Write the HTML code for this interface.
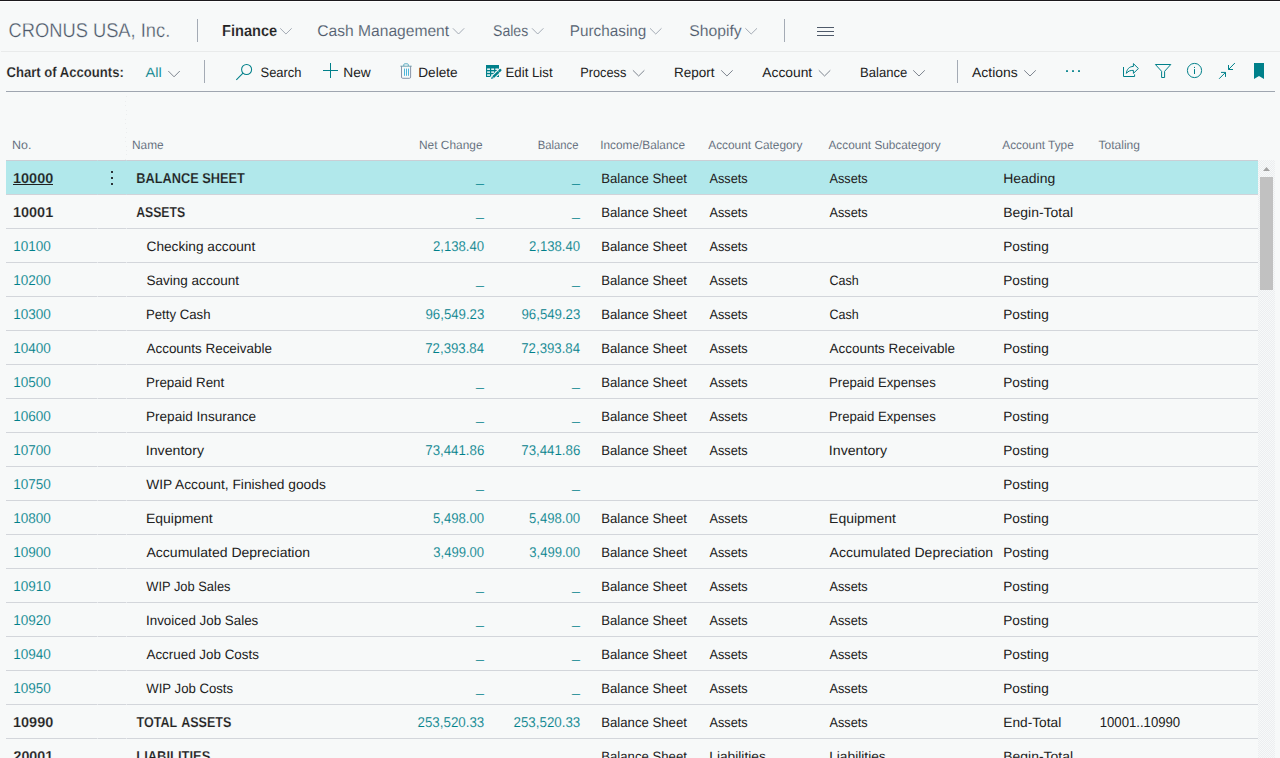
<!DOCTYPE html>
<html lang="en"><head><meta charset="utf-8"><title>Chart of Accounts</title>
<style>
html,body{margin:0;padding:0;background:#f7f9f9;}
body{width:1280px;height:758px;overflow:hidden;}
#app{position:relative;width:1280px;height:758px;overflow:hidden;background:#f7f9f9;font-family:"Liberation Sans", sans-serif;}

.t{position:absolute;left:0;top:0;white-space:nowrap;line-height:1;transform-origin:0 0;font-family:"Liberation Sans", sans-serif;text-rendering:geometricPrecision;}
.t{-webkit-text-stroke:0 #f7f9f9;}
.th{-webkit-text-stroke-width:0.12px;}
.sb{font-weight:700;-webkit-text-stroke-width:0.16px;}
.sel{-webkit-text-stroke-color:#b1e8eb;}
#company{-webkit-text-stroke-width:0.3px;}

h1,a{margin:0;font-weight:400;text-decoration:none;display:block;}
.b{position:absolute;}
.sc{background:repeating-conic-gradient(#eceef0 0% 25%, #f7f9f9 0% 50%) 0 0/2px 2px;}


</style></head><body>
<div id="app">
<div class="b" style="left:0px;top:0px;width:1280px;height:1px;background:#1c1a1d"></div>
<div class="b" style="left:0px;top:1px;width:1280px;height:1px;background:#ffffff"></div>
<div class="b" style="left:1px;top:51px;width:1279px;height:1px;background:#e9ebeb"></div>
<div class="b" style="left:6px;top:91px;width:1269px;height:1px;background:#9fa6b0"></div>
<div class="b" style="left:197px;top:19px;width:1px;height:23px;background:#a4abb5"></div>
<div class="b" style="left:784px;top:19px;width:1px;height:23px;background:#a4abb5"></div>
<div class="b" style="left:204px;top:60px;width:1px;height:23px;background:#a4abb5"></div>
<div class="b" style="left:957px;top:60px;width:1px;height:23px;background:#a4abb5"></div>
<div class="b" style="left:817px;top:27px;width:16.5px;height:1px;background:#4f5a6a"></div>
<div class="b" style="left:817px;top:31px;width:16.5px;height:1px;background:#4f5a6a"></div>
<div class="b" style="left:817px;top:35px;width:16.5px;height:1px;background:#4f5a6a"></div>
<div class="b" style="left:6px;top:160px;width:1252px;height:1px;background:#cbced5"></div>
<div class="b" style="left:6px;top:161px;width:1252px;height:33px;background:#b1e8eb"></div>
<div class="b" style="left:6px;top:194px;width:1252px;height:1px;background:#d0d3d9"></div>
<div class="b" style="left:6px;top:228px;width:1252px;height:1px;background:#d3d6db"></div>
<div class="b" style="left:6px;top:262px;width:1252px;height:1px;background:#d3d6db"></div>
<div class="b" style="left:6px;top:296px;width:1252px;height:1px;background:#d3d6db"></div>
<div class="b" style="left:6px;top:330px;width:1252px;height:1px;background:#d3d6db"></div>
<div class="b" style="left:6px;top:364px;width:1252px;height:1px;background:#d3d6db"></div>
<div class="b" style="left:6px;top:398px;width:1252px;height:1px;background:#d3d6db"></div>
<div class="b" style="left:6px;top:432px;width:1252px;height:1px;background:#d3d6db"></div>
<div class="b" style="left:6px;top:466px;width:1252px;height:1px;background:#d3d6db"></div>
<div class="b" style="left:6px;top:500px;width:1252px;height:1px;background:#d3d6db"></div>
<div class="b" style="left:6px;top:534px;width:1252px;height:1px;background:#d3d6db"></div>
<div class="b" style="left:6px;top:568px;width:1252px;height:1px;background:#d3d6db"></div>
<div class="b" style="left:6px;top:602px;width:1252px;height:1px;background:#d3d6db"></div>
<div class="b" style="left:6px;top:636px;width:1252px;height:1px;background:#d3d6db"></div>
<div class="b" style="left:6px;top:670px;width:1252px;height:1px;background:#d3d6db"></div>
<div class="b" style="left:6px;top:704px;width:1252px;height:1px;background:#d3d6db"></div>
<div class="b" style="left:6px;top:738px;width:1252px;height:1px;background:#d3d6db"></div>
<div class="b" style="left:97px;top:160px;width:1px;height:1px;background:rgba(190,235,238,0.5)"></div>
<div class="b" style="left:126px;top:160px;width:1px;height:1px;background:rgba(190,235,238,0.5)"></div>
<div class="b" style="left:97px;top:194px;width:1px;height:1px;background:rgba(190,235,238,0.5)"></div>
<div class="b" style="left:126px;top:194px;width:1px;height:1px;background:rgba(190,235,238,0.5)"></div>
<div class="b" style="left:97px;top:228px;width:1px;height:1px;background:rgba(247,249,249,0.55)"></div>
<div class="b" style="left:126px;top:228px;width:1px;height:1px;background:rgba(247,249,249,0.55)"></div>
<div class="b" style="left:97px;top:262px;width:1px;height:1px;background:rgba(247,249,249,0.55)"></div>
<div class="b" style="left:126px;top:262px;width:1px;height:1px;background:rgba(247,249,249,0.55)"></div>
<div class="b" style="left:97px;top:296px;width:1px;height:1px;background:rgba(247,249,249,0.55)"></div>
<div class="b" style="left:126px;top:296px;width:1px;height:1px;background:rgba(247,249,249,0.55)"></div>
<div class="b" style="left:97px;top:330px;width:1px;height:1px;background:rgba(247,249,249,0.55)"></div>
<div class="b" style="left:126px;top:330px;width:1px;height:1px;background:rgba(247,249,249,0.55)"></div>
<div class="b" style="left:97px;top:364px;width:1px;height:1px;background:rgba(247,249,249,0.55)"></div>
<div class="b" style="left:126px;top:364px;width:1px;height:1px;background:rgba(247,249,249,0.55)"></div>
<div class="b" style="left:97px;top:398px;width:1px;height:1px;background:rgba(247,249,249,0.55)"></div>
<div class="b" style="left:126px;top:398px;width:1px;height:1px;background:rgba(247,249,249,0.55)"></div>
<div class="b" style="left:97px;top:432px;width:1px;height:1px;background:rgba(247,249,249,0.55)"></div>
<div class="b" style="left:126px;top:432px;width:1px;height:1px;background:rgba(247,249,249,0.55)"></div>
<div class="b" style="left:97px;top:466px;width:1px;height:1px;background:rgba(247,249,249,0.55)"></div>
<div class="b" style="left:126px;top:466px;width:1px;height:1px;background:rgba(247,249,249,0.55)"></div>
<div class="b" style="left:97px;top:500px;width:1px;height:1px;background:rgba(247,249,249,0.55)"></div>
<div class="b" style="left:126px;top:500px;width:1px;height:1px;background:rgba(247,249,249,0.55)"></div>
<div class="b" style="left:97px;top:534px;width:1px;height:1px;background:rgba(247,249,249,0.55)"></div>
<div class="b" style="left:126px;top:534px;width:1px;height:1px;background:rgba(247,249,249,0.55)"></div>
<div class="b" style="left:97px;top:568px;width:1px;height:1px;background:rgba(247,249,249,0.55)"></div>
<div class="b" style="left:126px;top:568px;width:1px;height:1px;background:rgba(247,249,249,0.55)"></div>
<div class="b" style="left:97px;top:602px;width:1px;height:1px;background:rgba(247,249,249,0.55)"></div>
<div class="b" style="left:126px;top:602px;width:1px;height:1px;background:rgba(247,249,249,0.55)"></div>
<div class="b" style="left:97px;top:636px;width:1px;height:1px;background:rgba(247,249,249,0.55)"></div>
<div class="b" style="left:126px;top:636px;width:1px;height:1px;background:rgba(247,249,249,0.55)"></div>
<div class="b" style="left:97px;top:670px;width:1px;height:1px;background:rgba(247,249,249,0.55)"></div>
<div class="b" style="left:126px;top:670px;width:1px;height:1px;background:rgba(247,249,249,0.55)"></div>
<div class="b" style="left:97px;top:704px;width:1px;height:1px;background:rgba(247,249,249,0.55)"></div>
<div class="b" style="left:126px;top:704px;width:1px;height:1px;background:rgba(247,249,249,0.55)"></div>
<div class="b" style="left:97px;top:738px;width:1px;height:1px;background:rgba(247,249,249,0.55)"></div>
<div class="b" style="left:126px;top:738px;width:1px;height:1px;background:rgba(247,249,249,0.55)"></div>
<div class="b" style="left:126px;top:96px;width:1px;height:1px;background:#eceeef"></div>
<div class="b" style="left:125px;top:101px;width:1px;height:1px;background:#eceeef"></div>
<div class="b" style="left:125px;top:105px;width:1px;height:1px;background:#eceeef"></div>
<div class="b" style="left:126px;top:110px;width:1px;height:1px;background:#eceeef"></div>
<div class="b" style="left:126px;top:114px;width:1px;height:1px;background:#eceeef"></div>
<div class="b" style="left:125px;top:119px;width:1px;height:1px;background:#eceeef"></div>
<div class="b" style="left:125px;top:123px;width:1px;height:1px;background:#eceeef"></div>
<div class="b" style="left:126px;top:128px;width:1px;height:1px;background:#eceeef"></div>
<div class="b" style="left:126px;top:132px;width:1px;height:1px;background:#eceeef"></div>
<div class="b" style="left:125px;top:137px;width:1px;height:1px;background:#eceeef"></div>
<div class="b" style="left:125px;top:141px;width:1px;height:1px;background:#eceeef"></div>
<div class="b" style="left:126px;top:146px;width:1px;height:1px;background:#eceeef"></div>
<div class="b" style="left:126px;top:150px;width:1px;height:1px;background:#eceeef"></div>
<div class="b" style="left:126px;top:154px;width:1px;height:1px;background:#eceeef"></div>
<div class="b" style="left:125px;top:159px;width:1px;height:1px;background:#eceeef"></div>
<div class="b sc" style="left:1258px;top:160px;width:17px;height:598px"></div>
<div class="b" style="left:1260px;top:177px;width:13px;height:113px;background:#c1c1c1"></div>
<svg width="1280" height="758" viewBox="0 0 1280 758" style="position:absolute;left:0;top:0" aria-hidden="true"><path d="M280.2 28.3 L285.95 34 L291.7 28.3" fill="none" stroke="#9aa2ad" stroke-width="0.9"/>
<path d="M452.9 28.3 L458.55 34 L464.2 28.3" fill="none" stroke="#9aa2ad" stroke-width="0.9"/>
<path d="M532 28.3 L537.7 34 L543.4 28.3" fill="none" stroke="#9aa2ad" stroke-width="0.9"/>
<path d="M650 28.3 L655.75 34 L661.5 28.3" fill="none" stroke="#9aa2ad" stroke-width="0.9"/>
<path d="M745.4 28.3 L751.2 34 L757 28.3" fill="none" stroke="#9aa2ad" stroke-width="0.9"/>
<path d="M168.3 71 L174.05 76.8 L179.8 71" fill="none" stroke="#6f7782" stroke-width="0.9"/>
<path d="M632.9 70.3 L638.65 76 L644.4 70.3" fill="none" stroke="#6f7782" stroke-width="0.9"/>
<path d="M721.2 70.3 L726.95 76 L732.7 70.3" fill="none" stroke="#6f7782" stroke-width="0.9"/>
<path d="M818.8 70.3 L824.55 76 L830.3 70.3" fill="none" stroke="#6f7782" stroke-width="0.9"/>
<path d="M913.2 70.3 L919 76 L924.8 70.3" fill="none" stroke="#6f7782" stroke-width="0.9"/>
<path d="M1024.2 70.3 L1030 76 L1035.8 70.3" fill="none" stroke="#6f7782" stroke-width="0.9"/>
<g fill="none" stroke="#00808a" stroke-width="1.05"><circle cx="246.6" cy="69.5" r="5"/><path d="M243 73.1 L236.3 79.8"/></g>
<path d="M323 70.5 H338 M330.5 63 V78" fill="none" stroke="#00808a" stroke-width="1"/>
<g fill="none" stroke="#7c8aa0" stroke-width="0.9"><path d="M400.4 66.2 H411.7" stroke="#5f9aa8"/><path d="M403.8 66 V64.7 Q403.8 63.8 404.7 63.8 H407.4 Q408.3 63.8 408.3 64.7 V66" stroke="#4fa6bd"/><path d="M401.5 66.2 V77.1 Q401.5 78.3 402.7 78.3 H409.4 Q410.6 78.3 410.6 77.1 V66.2"/><path d="M404.5 68.6 V75.8 M406.5 68.6 V75.8 M408.5 68.6 V75.8" stroke="#45b1d8" stroke-width="0.95"/></g>
<g><rect x="486" y="65" width="13" height="12" fill="#00808a"/><g fill="#fdffff"><rect x="487.1" y="68.5" width="2.9" height="1.4"/><rect x="491.2" y="68.5" width="2.9" height="1.4"/><rect x="495.3" y="68.5" width="2.9" height="1.4"/><rect x="487.1" y="71.4" width="2.9" height="1.4"/><rect x="491.2" y="71.4" width="2.9" height="1.4"/><rect x="495.3" y="71.4" width="2.9" height="1.4"/><rect x="487.1" y="74.3" width="2.9" height="1.5"/><rect x="491.2" y="74.3" width="2.9" height="1.5"/><rect x="495.3" y="74.3" width="2.9" height="1.5"/></g><path d="M491.8 78.4 L500.3 70.2" stroke="#f7f9f9" stroke-width="4.4" stroke-linecap="round" fill="none"/><path d="M493.1 77.1 L498.6 71.8" stroke="#00808a" stroke-width="2.4" fill="none"/><path d="M499.5 70.9 L500.2 70.2" stroke="#00808a" stroke-width="2.6" stroke-linecap="round" fill="none"/><path d="M491 79 L491.9 76.6 L493.5 78.2 Z" fill="#00808a"/></g>
<g fill="#00808a"><rect x="1066.1" y="70.2" width="1.8" height="1.8"/><rect x="1072.1" y="70.2" width="1.8" height="1.8"/><rect x="1078.1" y="70.2" width="1.8" height="1.8"/></g>
<g fill="none" stroke="#00808a" stroke-width="1"><path d="M1123.5 67 V76.5 H1134.6 V74.4"/><path d="M1133.4 63.6 L1138.4 68.5 L1133.4 73.4 V70.4 C1130.3 70.3 1128.2 71 1126.4 73.4 C1126.8 69.2 1129.2 66.5 1133.4 66.4 Z" stroke-linejoin="miter"/></g>
<path d="M1155.4 64.5 H1170.8 L1164.6 71.3 V77.5 H1161.6 V71.3 Z" fill="none" stroke="#00808a" stroke-width="1" stroke-linejoin="miter"/>
<g fill="none" stroke="#00808a" stroke-width="1"><circle cx="1194.5" cy="70.5" r="7.1"/><path d="M1194.5 69.1 V74"/><path d="M1194.5 66.9 V68"/></g>
<g fill="none" stroke="#00808a" stroke-width="1"><path d="M1234.9 63 L1228.5 69.5 M1228.5 65 V69.5 H1233"/><path d="M1219.1 78.8 L1225.5 72.4 M1221 72.4 H1225.5 V76.9"/></g>
<path d="M1254 63 H1264 V79 L1259 76 L1254 79 Z" fill="#00808a"/>
<g fill="#2c3338"><rect x="111" y="171" width="2" height="2"/><rect x="111" y="177" width="2" height="2"/><rect x="111" y="183" width="2" height="2"/></g>
<path d="M1263 171 L1266.5 167 L1270 171 Z" fill="#a3a3a3"/></svg>
<header>
<span class="t" id="company" style="font-size:20px;color:#4d596a;transform:translate(8.5px,21px) scaleX(0.9155);">CRONUS USA, Inc.</span>
<nav aria-label="Role center">
<a class="t sb" style="font-size:16px;color:#212121;transform:translate(222px,24.12px) scaleX(0.9119);">Finance</a>
<a class="t th" style="font-size:15.6px;color:#505c6d;transform:translate(317.25px,24px) scaleX(1.0009);">Cash Management</a>
<a class="t th" style="font-size:15.6px;color:#505c6d;transform:translate(493px,24px) scaleX(0.9027);">Sales</a>
<a class="t th" style="font-size:15.6px;color:#505c6d;transform:translate(569.75px,24px) scaleX(0.9817);">Purchasing</a>
<a class="t th" style="font-size:15.6px;color:#505c6d;transform:translate(689.25px,24px) scaleX(1.0089);">Shopify</a>
</nav>
</header>
<div role="toolbar" aria-label="Chart of Accounts actions">
<h1 class="t sb" style="font-size:14.2px;color:#212121;transform:translate(6.5px,66.12px) scaleX(0.9228);">Chart of Accounts:</h1>
<a class="t th" style="font-size:13.6px;color:#00808a;transform:translate(145.5px,66px) scaleX(1.0739);">All</a>
<a class="t" style="font-size:13.6px;color:#212121;transform:translate(260.5px,66px) scaleX(0.9521);">Search</a>
<a class="t" style="font-size:13.6px;color:#212121;transform:translate(343.25px,66px) scaleX(1.011);">New</a>
<a class="t" style="font-size:13.6px;color:#212121;transform:translate(418.25px,66px) scaleX(1.0027);">Delete</a>
<a class="t" style="font-size:13.6px;color:#212121;transform:translate(505.5px,66px) scaleX(0.974);">Edit List</a>
<a class="t" style="font-size:13.6px;color:#212121;transform:translate(580.25px,66px) scaleX(0.939);">Process</a>
<a class="t" style="font-size:13.6px;color:#212121;transform:translate(674px,66px) scaleX(0.9909);">Report</a>
<a class="t" style="font-size:13.6px;color:#212121;transform:translate(762.25px,66px) scaleX(1.0167);">Account</a>
<a class="t" style="font-size:13.6px;color:#212121;transform:translate(860px,66px) scaleX(0.9611);">Balance</a>
<a class="t" style="font-size:13.6px;color:#212121;transform:translate(972px,66px) scaleX(1.0255);">Actions</a>
</div>
<div role="table" aria-label="Chart of Accounts">
<div role="row">
<span class="t th" role="columnheader" style="font-size:12px;color:#505c6d;transform:translate(12px,139px) scaleX(1.0372);">No.</span>
<span class="t th" role="columnheader" style="font-size:12px;color:#505c6d;transform:translate(132px,139px) scaleX(0.9895);">Name</span>
<span class="t th" role="columnheader" style="font-size:12px;color:#505c6d;transform:translate(419px,139px) scaleX(0.9914);">Net Change</span>
<span class="t th" role="columnheader" style="font-size:12px;color:#505c6d;transform:translate(537.75px,139px) scaleX(0.9388);">Balance</span>
<span class="t th" role="columnheader" style="font-size:12px;color:#505c6d;transform:translate(600.25px,139px) scaleX(0.9845);">Income/Balance</span>
<span class="t th" role="columnheader" style="font-size:12px;color:#505c6d;transform:translate(708.25px,139px) scaleX(0.9879);">Account Category</span>
<span class="t th" role="columnheader" style="font-size:12px;color:#505c6d;transform:translate(828.5px,139px) scaleX(0.9826);">Account Subcategory</span>
<span class="t th" role="columnheader" style="font-size:12px;color:#505c6d;transform:translate(1002.25px,139px) scaleX(0.986);">Account Type</span>
<span class="t th" role="columnheader" style="font-size:12px;color:#505c6d;transform:translate(1098.5px,139px) scaleX(1.0015);">Totaling</span>
</div>
<div role="row" aria-selected="true">
<span class="t sb sel" role="cell" style="font-size:14.2px;color:#212121;transform:translate(13px,172.12px) scaleX(1.0194);">10000</span>
<span class="t sb sel" role="cell" style="font-size:14.2px;color:#212121;transform:translate(136.25px,172.12px) scaleX(0.8998);">BALANCE SHEET</span>
<span class="t th sel" role="cell" style="font-size:14.2px;color:#00808a;transform:translate(476px,171.2px) scaleX(1.0027);">_</span>
<span class="t th sel" role="cell" style="font-size:14.2px;color:#00808a;transform:translate(572px,171.2px) scaleX(1.0027);">_</span>
<span class="t sel" role="cell" style="font-size:13.6px;color:#212121;transform:translate(601.25px,172px) scaleX(0.9687);">Balance Sheet</span>
<span class="t sel" role="cell" style="font-size:13.6px;color:#212121;transform:translate(709.5px,172px) scaleX(0.9375);">Assets</span>
<span class="t sel" role="cell" style="font-size:13.6px;color:#212121;transform:translate(829.4px,172px) scaleX(0.9375);">Assets</span>
<span class="t sel" role="cell" style="font-size:13.6px;color:#212121;transform:translate(1003.25px,172px) scaleX(1.0263);">Heading</span>
</div>
<div role="row">
<span class="t sb" role="cell" style="font-size:14.2px;color:#212121;transform:translate(13px,206.12px) scaleX(1.019);">10001</span>
<span class="t sb" role="cell" style="font-size:14.2px;color:#212121;transform:translate(136.25px,206.12px) scaleX(0.8609);">ASSETS</span>
<span class="t th" role="cell" style="font-size:14.2px;color:#00808a;transform:translate(476px,205.2px) scaleX(1.0027);">_</span>
<span class="t th" role="cell" style="font-size:14.2px;color:#00808a;transform:translate(572px,205.2px) scaleX(1.0027);">_</span>
<span class="t" role="cell" style="font-size:13.6px;color:#212121;transform:translate(601.25px,206px) scaleX(0.9687);">Balance Sheet</span>
<span class="t" role="cell" style="font-size:13.6px;color:#212121;transform:translate(709.5px,206px) scaleX(0.9375);">Assets</span>
<span class="t" role="cell" style="font-size:13.6px;color:#212121;transform:translate(829.4px,206px) scaleX(0.9375);">Assets</span>
<span class="t" role="cell" style="font-size:13.6px;color:#212121;transform:translate(1003.25px,206px) scaleX(1.0264);">Begin-Total</span>
</div>
<div role="row">
<span class="t th" role="cell" style="font-size:14.2px;color:#00808a;transform:translate(13.25px,240px) scaleX(0.952);">10100</span>
<span class="t" role="cell" style="font-size:13.6px;color:#212121;transform:translate(146.5px,240px) scaleX(1.0067);">Checking account</span>
<span class="t th" role="cell" style="font-size:14.2px;color:#00808a;transform:translate(433px,240px) scaleX(0.9251);">2,138.40</span>
<span class="t th" role="cell" style="font-size:14.2px;color:#00808a;transform:translate(529px,240px) scaleX(0.9251);">2,138.40</span>
<span class="t" role="cell" style="font-size:13.6px;color:#212121;transform:translate(601.25px,240px) scaleX(0.9687);">Balance Sheet</span>
<span class="t" role="cell" style="font-size:13.6px;color:#212121;transform:translate(709.5px,240px) scaleX(0.9375);">Assets</span>
<span class="t" role="cell" style="font-size:13.6px;color:#212121;transform:translate(1003.25px,240px) scaleX(1.0035);">Posting</span>
</div>
<div role="row">
<span class="t th" role="cell" style="font-size:14.2px;color:#00808a;transform:translate(13.25px,274px) scaleX(0.952);">10200</span>
<span class="t" role="cell" style="font-size:13.6px;color:#212121;transform:translate(146.5px,274px) scaleX(0.9947);">Saving account</span>
<span class="t th" role="cell" style="font-size:14.2px;color:#00808a;transform:translate(476px,273.2px) scaleX(1.0027);">_</span>
<span class="t th" role="cell" style="font-size:14.2px;color:#00808a;transform:translate(572px,273.2px) scaleX(1.0027);">_</span>
<span class="t" role="cell" style="font-size:13.6px;color:#212121;transform:translate(601.25px,274px) scaleX(0.9687);">Balance Sheet</span>
<span class="t" role="cell" style="font-size:13.6px;color:#212121;transform:translate(709.5px,274px) scaleX(0.9375);">Assets</span>
<span class="t" role="cell" style="font-size:13.6px;color:#212121;transform:translate(829.5px,274px) scaleX(0.9203);">Cash</span>
<span class="t" role="cell" style="font-size:13.6px;color:#212121;transform:translate(1003.25px,274px) scaleX(1.0035);">Posting</span>
</div>
<div role="row">
<span class="t th" role="cell" style="font-size:14.2px;color:#00808a;transform:translate(13.25px,308px) scaleX(0.952);">10300</span>
<span class="t" role="cell" style="font-size:13.6px;color:#212121;transform:translate(146px,308px) scaleX(0.9695);">Petty Cash</span>
<span class="t th" role="cell" style="font-size:14.2px;color:#00808a;transform:translate(425.5px,308px) scaleX(0.9319);">96,549.23</span>
<span class="t th" role="cell" style="font-size:14.2px;color:#00808a;transform:translate(521.5px,308px) scaleX(0.9319);">96,549.23</span>
<span class="t" role="cell" style="font-size:13.6px;color:#212121;transform:translate(601.25px,308px) scaleX(0.9687);">Balance Sheet</span>
<span class="t" role="cell" style="font-size:13.6px;color:#212121;transform:translate(709.5px,308px) scaleX(0.9375);">Assets</span>
<span class="t" role="cell" style="font-size:13.6px;color:#212121;transform:translate(829.5px,308px) scaleX(0.9203);">Cash</span>
<span class="t" role="cell" style="font-size:13.6px;color:#212121;transform:translate(1003.25px,308px) scaleX(1.0035);">Posting</span>
</div>
<div role="row">
<span class="t th" role="cell" style="font-size:14.2px;color:#00808a;transform:translate(13.25px,342px) scaleX(0.952);">10400</span>
<span class="t" role="cell" style="font-size:13.6px;color:#212121;transform:translate(146.5px,342px) scaleX(0.9879);">Accounts Receivable</span>
<span class="t th" role="cell" style="font-size:14.2px;color:#00808a;transform:translate(425.25px,342px) scaleX(0.9319);">72,393.84</span>
<span class="t th" role="cell" style="font-size:14.2px;color:#00808a;transform:translate(521.25px,342px) scaleX(0.9319);">72,393.84</span>
<span class="t" role="cell" style="font-size:13.6px;color:#212121;transform:translate(601.25px,342px) scaleX(0.9687);">Balance Sheet</span>
<span class="t" role="cell" style="font-size:13.6px;color:#212121;transform:translate(709.5px,342px) scaleX(0.9375);">Assets</span>
<span class="t" role="cell" style="font-size:13.6px;color:#212121;transform:translate(829.6px,342px) scaleX(0.9879);">Accounts Receivable</span>
<span class="t" role="cell" style="font-size:13.6px;color:#212121;transform:translate(1003.25px,342px) scaleX(1.0035);">Posting</span>
</div>
<div role="row">
<span class="t th" role="cell" style="font-size:14.2px;color:#00808a;transform:translate(13.25px,376px) scaleX(0.952);">10500</span>
<span class="t" role="cell" style="font-size:13.6px;color:#212121;transform:translate(146px,376px) scaleX(0.9868);">Prepaid Rent</span>
<span class="t th" role="cell" style="font-size:14.2px;color:#00808a;transform:translate(476px,375.2px) scaleX(1.0027);">_</span>
<span class="t th" role="cell" style="font-size:14.2px;color:#00808a;transform:translate(572px,375.2px) scaleX(1.0027);">_</span>
<span class="t" role="cell" style="font-size:13.6px;color:#212121;transform:translate(601.25px,376px) scaleX(0.9687);">Balance Sheet</span>
<span class="t" role="cell" style="font-size:13.6px;color:#212121;transform:translate(709.5px,376px) scaleX(0.9375);">Assets</span>
<span class="t" role="cell" style="font-size:13.6px;color:#212121;transform:translate(829px,376px) scaleX(0.9676);">Prepaid Expenses</span>
<span class="t" role="cell" style="font-size:13.6px;color:#212121;transform:translate(1003.25px,376px) scaleX(1.0035);">Posting</span>
</div>
<div role="row">
<span class="t th" role="cell" style="font-size:14.2px;color:#00808a;transform:translate(13.25px,410px) scaleX(0.952);">10600</span>
<span class="t" role="cell" style="font-size:13.6px;color:#212121;transform:translate(146px,410px) scaleX(0.9985);">Prepaid Insurance</span>
<span class="t th" role="cell" style="font-size:14.2px;color:#00808a;transform:translate(476px,409.2px) scaleX(1.0027);">_</span>
<span class="t th" role="cell" style="font-size:14.2px;color:#00808a;transform:translate(572px,409.2px) scaleX(1.0027);">_</span>
<span class="t" role="cell" style="font-size:13.6px;color:#212121;transform:translate(601.25px,410px) scaleX(0.9687);">Balance Sheet</span>
<span class="t" role="cell" style="font-size:13.6px;color:#212121;transform:translate(709.5px,410px) scaleX(0.9375);">Assets</span>
<span class="t" role="cell" style="font-size:13.6px;color:#212121;transform:translate(829px,410px) scaleX(0.9676);">Prepaid Expenses</span>
<span class="t" role="cell" style="font-size:13.6px;color:#212121;transform:translate(1003.25px,410px) scaleX(1.0035);">Posting</span>
</div>
<div role="row">
<span class="t th" role="cell" style="font-size:14.2px;color:#00808a;transform:translate(13.25px,444px) scaleX(0.952);">10700</span>
<span class="t" role="cell" style="font-size:13.6px;color:#212121;transform:translate(145.75px,444px) scaleX(1.0418);">Inventory</span>
<span class="t th" role="cell" style="font-size:14.2px;color:#00808a;transform:translate(425.25px,444px) scaleX(0.9359);">73,441.86</span>
<span class="t th" role="cell" style="font-size:14.2px;color:#00808a;transform:translate(521.25px,444px) scaleX(0.9359);">73,441.86</span>
<span class="t" role="cell" style="font-size:13.6px;color:#212121;transform:translate(601.25px,444px) scaleX(0.9687);">Balance Sheet</span>
<span class="t" role="cell" style="font-size:13.6px;color:#212121;transform:translate(709.5px,444px) scaleX(0.9375);">Assets</span>
<span class="t" role="cell" style="font-size:13.6px;color:#212121;transform:translate(828.85px,444px) scaleX(1.0418);">Inventory</span>
<span class="t" role="cell" style="font-size:13.6px;color:#212121;transform:translate(1003.25px,444px) scaleX(1.0035);">Posting</span>
</div>
<div role="row">
<span class="t th" role="cell" style="font-size:14.2px;color:#00808a;transform:translate(13.25px,478px) scaleX(0.952);">10750</span>
<span class="t" role="cell" style="font-size:13.6px;color:#212121;transform:translate(146.25px,478px) scaleX(1.0125);">WIP Account, Finished goods</span>
<span class="t th" role="cell" style="font-size:14.2px;color:#00808a;transform:translate(476px,477.2px) scaleX(1.0027);">_</span>
<span class="t th" role="cell" style="font-size:14.2px;color:#00808a;transform:translate(572px,477.2px) scaleX(1.0027);">_</span>
<span class="t" role="cell" style="font-size:13.6px;color:#212121;transform:translate(1003.25px,478px) scaleX(1.0035);">Posting</span>
</div>
<div role="row">
<span class="t th" role="cell" style="font-size:14.2px;color:#00808a;transform:translate(13.25px,512px) scaleX(0.952);">10800</span>
<span class="t" role="cell" style="font-size:13.6px;color:#212121;transform:translate(146px,512px) scaleX(1.0265);">Equipment</span>
<span class="t th" role="cell" style="font-size:14.2px;color:#00808a;transform:translate(433px,512px) scaleX(0.9251);">5,498.00</span>
<span class="t th" role="cell" style="font-size:14.2px;color:#00808a;transform:translate(529px,512px) scaleX(0.9251);">5,498.00</span>
<span class="t" role="cell" style="font-size:13.6px;color:#212121;transform:translate(601.25px,512px) scaleX(0.9687);">Balance Sheet</span>
<span class="t" role="cell" style="font-size:13.6px;color:#212121;transform:translate(709.5px,512px) scaleX(0.9375);">Assets</span>
<span class="t" role="cell" style="font-size:13.6px;color:#212121;transform:translate(829.1px,512px) scaleX(1.0265);">Equipment</span>
<span class="t" role="cell" style="font-size:13.6px;color:#212121;transform:translate(1003.25px,512px) scaleX(1.0035);">Posting</span>
</div>
<div role="row">
<span class="t th" role="cell" style="font-size:14.2px;color:#00808a;transform:translate(13.25px,546px) scaleX(0.952);">10900</span>
<span class="t" role="cell" style="font-size:13.6px;color:#212121;transform:translate(146.5px,546px) scaleX(1.0307);">Accumulated Depreciation</span>
<span class="t th" role="cell" style="font-size:14.2px;color:#00808a;transform:translate(433.25px,546px) scaleX(0.9205);">3,499.00</span>
<span class="t th" role="cell" style="font-size:14.2px;color:#00808a;transform:translate(529.25px,546px) scaleX(0.9205);">3,499.00</span>
<span class="t" role="cell" style="font-size:13.6px;color:#212121;transform:translate(601.25px,546px) scaleX(0.9687);">Balance Sheet</span>
<span class="t" role="cell" style="font-size:13.6px;color:#212121;transform:translate(709.5px,546px) scaleX(0.9375);">Assets</span>
<span class="t" role="cell" style="font-size:13.6px;color:#212121;transform:translate(829.6px,546px) scaleX(1.0307);">Accumulated Depreciation</span>
<span class="t" role="cell" style="font-size:13.6px;color:#212121;transform:translate(1003.25px,546px) scaleX(1.0035);">Posting</span>
</div>
<div role="row">
<span class="t th" role="cell" style="font-size:14.2px;color:#00808a;transform:translate(13.25px,580px) scaleX(0.952);">10910</span>
<span class="t" role="cell" style="font-size:13.6px;color:#212121;transform:translate(146.25px,580px) scaleX(0.9474);">WIP Job Sales</span>
<span class="t th" role="cell" style="font-size:14.2px;color:#00808a;transform:translate(476px,579.2px) scaleX(1.0027);">_</span>
<span class="t th" role="cell" style="font-size:14.2px;color:#00808a;transform:translate(572px,579.2px) scaleX(1.0027);">_</span>
<span class="t" role="cell" style="font-size:13.6px;color:#212121;transform:translate(601.25px,580px) scaleX(0.9687);">Balance Sheet</span>
<span class="t" role="cell" style="font-size:13.6px;color:#212121;transform:translate(709.5px,580px) scaleX(0.9375);">Assets</span>
<span class="t" role="cell" style="font-size:13.6px;color:#212121;transform:translate(829.4px,580px) scaleX(0.9375);">Assets</span>
<span class="t" role="cell" style="font-size:13.6px;color:#212121;transform:translate(1003.25px,580px) scaleX(1.0035);">Posting</span>
</div>
<div role="row">
<span class="t th" role="cell" style="font-size:14.2px;color:#00808a;transform:translate(13.25px,614px) scaleX(0.952);">10920</span>
<span class="t" role="cell" style="font-size:13.6px;color:#212121;transform:translate(146px,614px) scaleX(0.984);">Invoiced Job Sales</span>
<span class="t th" role="cell" style="font-size:14.2px;color:#00808a;transform:translate(476px,613.2px) scaleX(1.0027);">_</span>
<span class="t th" role="cell" style="font-size:14.2px;color:#00808a;transform:translate(572px,613.2px) scaleX(1.0027);">_</span>
<span class="t" role="cell" style="font-size:13.6px;color:#212121;transform:translate(601.25px,614px) scaleX(0.9687);">Balance Sheet</span>
<span class="t" role="cell" style="font-size:13.6px;color:#212121;transform:translate(709.5px,614px) scaleX(0.9375);">Assets</span>
<span class="t" role="cell" style="font-size:13.6px;color:#212121;transform:translate(829.4px,614px) scaleX(0.9375);">Assets</span>
<span class="t" role="cell" style="font-size:13.6px;color:#212121;transform:translate(1003.25px,614px) scaleX(1.0035);">Posting</span>
</div>
<div role="row">
<span class="t th" role="cell" style="font-size:14.2px;color:#00808a;transform:translate(13.25px,648px) scaleX(0.952);">10940</span>
<span class="t" role="cell" style="font-size:13.6px;color:#212121;transform:translate(146.5px,648px) scaleX(0.9849);">Accrued Job Costs</span>
<span class="t th" role="cell" style="font-size:14.2px;color:#00808a;transform:translate(476px,647.2px) scaleX(1.0027);">_</span>
<span class="t th" role="cell" style="font-size:14.2px;color:#00808a;transform:translate(572px,647.2px) scaleX(1.0027);">_</span>
<span class="t" role="cell" style="font-size:13.6px;color:#212121;transform:translate(601.25px,648px) scaleX(0.9687);">Balance Sheet</span>
<span class="t" role="cell" style="font-size:13.6px;color:#212121;transform:translate(709.5px,648px) scaleX(0.9375);">Assets</span>
<span class="t" role="cell" style="font-size:13.6px;color:#212121;transform:translate(829.4px,648px) scaleX(0.9375);">Assets</span>
<span class="t" role="cell" style="font-size:13.6px;color:#212121;transform:translate(1003.25px,648px) scaleX(1.0035);">Posting</span>
</div>
<div role="row">
<span class="t th" role="cell" style="font-size:14.2px;color:#00808a;transform:translate(13.25px,682px) scaleX(0.952);">10950</span>
<span class="t" role="cell" style="font-size:13.6px;color:#212121;transform:translate(146.25px,682px) scaleX(0.9687);">WIP Job Costs</span>
<span class="t th" role="cell" style="font-size:14.2px;color:#00808a;transform:translate(476px,681.2px) scaleX(1.0027);">_</span>
<span class="t th" role="cell" style="font-size:14.2px;color:#00808a;transform:translate(572px,681.2px) scaleX(1.0027);">_</span>
<span class="t" role="cell" style="font-size:13.6px;color:#212121;transform:translate(601.25px,682px) scaleX(0.9687);">Balance Sheet</span>
<span class="t" role="cell" style="font-size:13.6px;color:#212121;transform:translate(709.5px,682px) scaleX(0.9375);">Assets</span>
<span class="t" role="cell" style="font-size:13.6px;color:#212121;transform:translate(829.4px,682px) scaleX(0.9375);">Assets</span>
<span class="t" role="cell" style="font-size:13.6px;color:#212121;transform:translate(1003.25px,682px) scaleX(1.0035);">Posting</span>
</div>
<div role="row">
<span class="t sb" role="cell" style="font-size:14.2px;color:#212121;transform:translate(13px,716.12px) scaleX(1.0194);">10990</span>
<span class="t sb" role="cell" style="font-size:14.2px;color:#212121;word-spacing:1.5px;transform:translate(136.5px,716.12px) scaleX(0.8827);">TOTAL ASSETS</span>
<span class="t th" role="cell" style="font-size:14.2px;color:#00808a;transform:translate(417.5px,716px) scaleX(0.9407);">253,520.33</span>
<span class="t th" role="cell" style="font-size:14.2px;color:#00808a;transform:translate(513.5px,716px) scaleX(0.9407);">253,520.33</span>
<span class="t" role="cell" style="font-size:13.6px;color:#212121;transform:translate(601.25px,716px) scaleX(0.9687);">Balance Sheet</span>
<span class="t" role="cell" style="font-size:13.6px;color:#212121;transform:translate(709.5px,716px) scaleX(0.9375);">Assets</span>
<span class="t" role="cell" style="font-size:13.6px;color:#212121;transform:translate(829.4px,716px) scaleX(0.9375);">Assets</span>
<span class="t" role="cell" style="font-size:13.6px;color:#212121;transform:translate(1003.25px,716px) scaleX(1.0096);">End-Total</span>
<span class="t" role="cell" style="font-size:14.2px;color:#212121;transform:translate(1099.75px,716px) scaleX(0.9265);">10001..10990</span>
</div>
<div role="row">
<span class="t sb" role="cell" style="font-size:14.2px;color:#212121;transform:translate(13.5px,750.12px) scaleX(1.0053);">20001</span>
<span class="t sb" role="cell" style="font-size:14.2px;color:#212121;transform:translate(136.25px,750.12px) scaleX(0.913);">LIABILITIES</span>
<span class="t th" role="cell" style="font-size:14.2px;color:#00808a;transform:translate(476px,749.2px) scaleX(1.0027);">_</span>
<span class="t th" role="cell" style="font-size:14.2px;color:#00808a;transform:translate(572px,749.2px) scaleX(1.0027);">_</span>
<span class="t" role="cell" style="font-size:13.6px;color:#212121;transform:translate(601.25px,750px) scaleX(0.9687);">Balance Sheet</span>
<span class="t" role="cell" style="font-size:13.6px;color:#212121;transform:translate(709.25px,750px) scaleX(1.0116);">Liabilities</span>
<span class="t" role="cell" style="font-size:13.6px;color:#212121;transform:translate(829.15px,750px) scaleX(1.0116);">Liabilities</span>
<span class="t" role="cell" style="font-size:13.6px;color:#212121;transform:translate(1003.25px,750px) scaleX(1.0264);">Begin-Total</span>
</div>
</div>
<div class="b" style="left:13.3px;top:184px;width:39.6px;height:1px;background:#212121"></div>
</div>
</body></html>
